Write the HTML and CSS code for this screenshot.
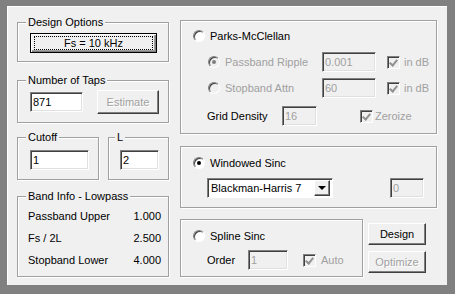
FILE: index.html
```html
<!DOCTYPE html>
<html lang="en">
<head>
  <meta charset="UTF-8" />
  <title>Filter Design</title>
  <link rel="stylesheet" href="styles.css">
</head>
<body>
  <div class="dialog">
    <div class="col-left">
      <div class="grp g-design">
        <div class="cap">Design Options</div>
        <button class="btn btn-default btn-fs"><span class="focus">Fs = 10 kHz</span></button>
      </div>

      <div class="grp g-taps">
        <div class="cap">Number of Taps</div>
        <div class="row-taps">
          <input class="edit w-taps" value="871">
          <button class="btn btn-est" disabled>Estimate</button>
        </div>
      </div>

      <div class="pair">
        <div class="grp g-cutoff">
          <div class="cap">Cutoff</div>
          <input class="edit w-cutoff" value="1">
        </div>
        <div class="grp g-l">
          <div class="cap">L</div>
          <input class="edit w-l" value="2">
        </div>
      </div>

      <div class="grp g-band">
        <div class="cap">Band Info - Lowpass</div>
        <div class="info"><span>Passband Upper</span><span>1.000</span></div>
        <div class="info"><span>Fs / 2L</span><span>2.500</span></div>
        <div class="info"><span>Stopband Lower</span><span>4.000</span></div>
      </div>
    </div>

    <div class="col-right">
      <div class="grp g-parks">
        <div class="line">
          <span class="radio"></span><span>Parks-McClellan</span>
        </div>
        <div class="line sub">
          <span class="opt"><span class="radio off checked"></span><span class="dim">Passband Ripple</span></span>
          <input class="edit off w-ripple" value="0.001" disabled>
          <span class="check off"></span><span class="dim">in dB</span>
        </div>
        <div class="line sub">
          <span class="opt"><span class="radio off"></span><span class="dim">Stopband Attn</span></span>
          <input class="edit off w-ripple" value="60" disabled>
          <span class="check off"></span><span class="dim">in dB</span>
        </div>
        <div class="line grid-row">
          <span class="lbl-grid">Grid Density</span>
          <input class="edit off w-grid" value="16" disabled>
          <span class="check off zero"></span><span class="dim">Zeroize</span>
        </div>
      </div>

      <div class="grp g-windowed">
        <div class="line">
          <span class="radio checked"></span><span>Windowed Sinc</span>
        </div>
        <div class="line win-row">
          <div class="combo">
            <span class="combo-text">Blackman-Harris 7</span>
            <span class="combo-btn"><span class="arrow"></span></span>
          </div>
          <input class="edit off w-zero" value="0" disabled>
        </div>
      </div>

      <div class="spline-row">
        <div class="grp g-spline">
          <div class="line">
            <span class="radio"></span><span>Spline Sinc</span>
          </div>
          <div class="line order-row">
            <span class="lbl-order">Order</span>
            <input class="edit off w-order" value="1" disabled>
            <span class="check off auto"></span><span class="dim">Auto</span>
          </div>
        </div>
        <div class="buttons">
          <button class="btn btn-side">Design</button>
          <button class="btn btn-side" disabled>Optimize</button>
        </div>
      </div>
    </div>
  </div>
</body>
</html>
```

FILE: styles.css
```css
body {
  margin: 0;
  background: #808080;
  font-family: "Liberation Sans", Arial, sans-serif;
  font-size: 11px;
  color: #000;
}

.dialog {
  margin: 6px 0 0 7px;
  width: 440px;
  height: 279px;
  box-sizing: border-box;
  padding: 14px 0 0 10px;
  background: #f0f0f0;
  box-shadow: inset 1px 1px #fff;
  display: flex;
  gap: 11px;
}

/* group boxes */
.grp {
  box-sizing: border-box;
  border: 1px solid #a0a0a0;
  box-shadow: 1px 1px #fff, inset 1px 1px #fff;
}

/* caption sits on the top border line */
.cap {
  display: table;
  margin: -7px 0 0 -4px;
  padding: 0 2px;
  line-height: 13px;
  background: #f0f0f0;
}

.col-left {
  width: 152px;
  margin-top: 2px;
  display: flex;
  flex-direction: column;
}

.g-design {
  height: 40px;
  padding: 0 0 0 12px;
}

.g-design .cap { margin-bottom: 4px; }

.g-taps {
  height: 43px;
  margin-top: 18px;
  padding: 0 0 0 12px;
}

.g-taps .cap { margin-bottom: 3px; }

.row-taps {
  display: flex;
  align-items: center;
  gap: 14px;
}

.pair {
  display: flex;
  gap: 9px;
  margin-top: 14px;
}

.g-cutoff {
  width: 82px;
  height: 43px;
  padding: 0 0 0 12px;
}

.g-l {
  width: 61px;
  height: 43px;
  padding: 0 0 0 11px;
}

.g-cutoff .cap,
.g-l .cap { margin-bottom: 6px; }

.g-l .cap { margin-left: -5px; }

.g-band {
  height: 81px;
  margin-top: 16px;
  padding: 0 7px 0 10px;
}

.g-band .cap {
  margin-left: -2px;
  margin-bottom: 2px;
}

.info {
  display: flex;
  justify-content: space-between;
  align-items: center;
  height: 22px;
}

.col-right {
  width: 257px;
  display: flex;
  flex-direction: column;
}

.g-parks {
  height: 114px;
  padding: 5px 0 0 12px;
}

.g-windowed {
  height: 62px;
  margin-top: 12px;
  padding: 6px 0 0 12px;
}

.spline-row {
  display: flex;
  margin-top: 11px;
  height: 58px;
}

.g-spline {
  width: 183px;
  height: 58px;
  padding: 6px 0 0 12px;
}

.buttons {
  display: flex;
  flex-direction: column;
  gap: 6px;
  margin: 4px 0 0 5px;
}

/* rows inside groups */
.line {
  display: flex;
  align-items: center;
  height: 20px;
}

.line.sub {
  margin-top: 6px;
  padding-left: 15px;
}

.opt {
  display: flex;
  align-items: center;
  width: 114px;
}

.grid-row {
  margin-top: 8px;
  padding-left: 14px;
}

.lbl-grid {
  width: 75px;
}

.win-row {
  margin-top: 5px;
  padding-left: 14px;
}

.order-row {
  margin-top: 4px;
  padding-left: 14px;
}

.lbl-order {
  width: 41px;
}

.dim {
  color: #a0a0a0;
}

/* edit boxes */
.edit {
  box-sizing: border-box;
  height: 20px;
  margin: 0;
  padding: 0 2px;
  font: inherit;
  color: #000;
  background: #fff;
  border: 1px solid;
  border-color: #808080 #fff #fff #808080;
  box-shadow: inset 1px 1px #404040, inset -1px -1px #e0e0e0;
  outline: none;
}

.edit.off {
  background: #f0f0f0;
  color: #a0a0a0;
}

.w-taps { width: 53px; }
.w-cutoff { width: 59px; }
.w-l { width: 39px; }
.w-ripple { width: 54px; }
.w-grid { width: 35px; }
.w-zero { width: 34px; margin-left: 57px; }
.w-order { width: 40px; }

/* radio buttons */
.radio {
  position: relative;
  width: 12px;
  height: 12px;
  box-sizing: border-box;
  margin-right: 5px;
  border-radius: 50%;
  border: 1px solid;
  border-color: #808080 #fff #fff #808080;
  background: #fff;
  box-shadow: inset 1px 1px #404040;
  flex: none;
}

.radio.off {
  background: #f0f0f0;
}

.radio.checked::after {
  content: "";
  position: absolute;
  left: 3px;
  top: 3px;
  width: 4px;
  height: 4px;
  border-radius: 50%;
  background: #000;
}

.radio.off.checked::after {
  background: #808080;
}

/* check boxes */
.check {
  position: relative;
  width: 13px;
  height: 13px;
  box-sizing: border-box;
  margin: 0 4px 0 11px;
  border: 1px solid;
  border-color: #808080 #fff #fff #808080;
  background: #f0f0f0;
  box-shadow: inset 1px 1px #404040;
  flex: none;
}

.check::after {
  content: "";
  position: absolute;
  left: 3px;
  top: 1px;
  width: 3px;
  height: 6px;
  border: solid #909090;
  border-width: 0 2px 2px 0;
  transform: rotate(40deg);
}

.check.zero { margin-left: 43px; margin-right: 2px; }
.check.auto { margin-left: 15px; margin-right: 5px; }

/* push buttons */
.btn {
  box-sizing: border-box;
  margin: 0;
  padding: 0;
  font: inherit;
  color: #000;
  background: #f0f0f0;
  border: 1px solid;
  border-color: #fff #404040 #404040 #fff;
  box-shadow: inset -1px -1px #808080;
}

.btn:disabled {
  color: #a0a0a0;
  text-shadow: 1px 1px #fff;
}

.btn-default {
  border-color: #000;
  box-shadow: inset 1px 1px #fff, inset -1px -1px #808080, inset -2px -2px #a0a0a0;
  display: flex;
  padding: 2px 3px;
}

.btn-fs {
  width: 127px;
  height: 20px;
}

.focus {
  flex: 1;
  line-height: 12px;
  border: 1px dotted #000;
  text-align: center;
}

.btn-est {
  width: 62px;
  height: 24px;
}

.btn-side {
  width: 58px;
  height: 22px;
}

/* combo box */
.combo {
  box-sizing: border-box;
  width: 126px;
  height: 20px;
  display: flex;
  align-items: center;
  background: #fff;
  border: 1px solid;
  border-color: #808080 #fff #fff #808080;
  box-shadow: inset 1px 1px #404040;
  padding: 2px 2px 2px 3px;
}

.combo-text {
  flex: 1;
}

.combo-btn {
  box-sizing: border-box;
  width: 16px;
  height: 16px;
  display: flex;
  align-items: center;
  justify-content: center;
  background: #f0f0f0;
  border: 1px solid;
  border-color: #fff #404040 #404040 #fff;
  box-shadow: inset -1px -1px #808080;
}

.arrow {
  width: 0;
  height: 0;
  border-left: 4px solid transparent;
  border-right: 4px solid transparent;
  border-top: 4px solid #000;
}
```
